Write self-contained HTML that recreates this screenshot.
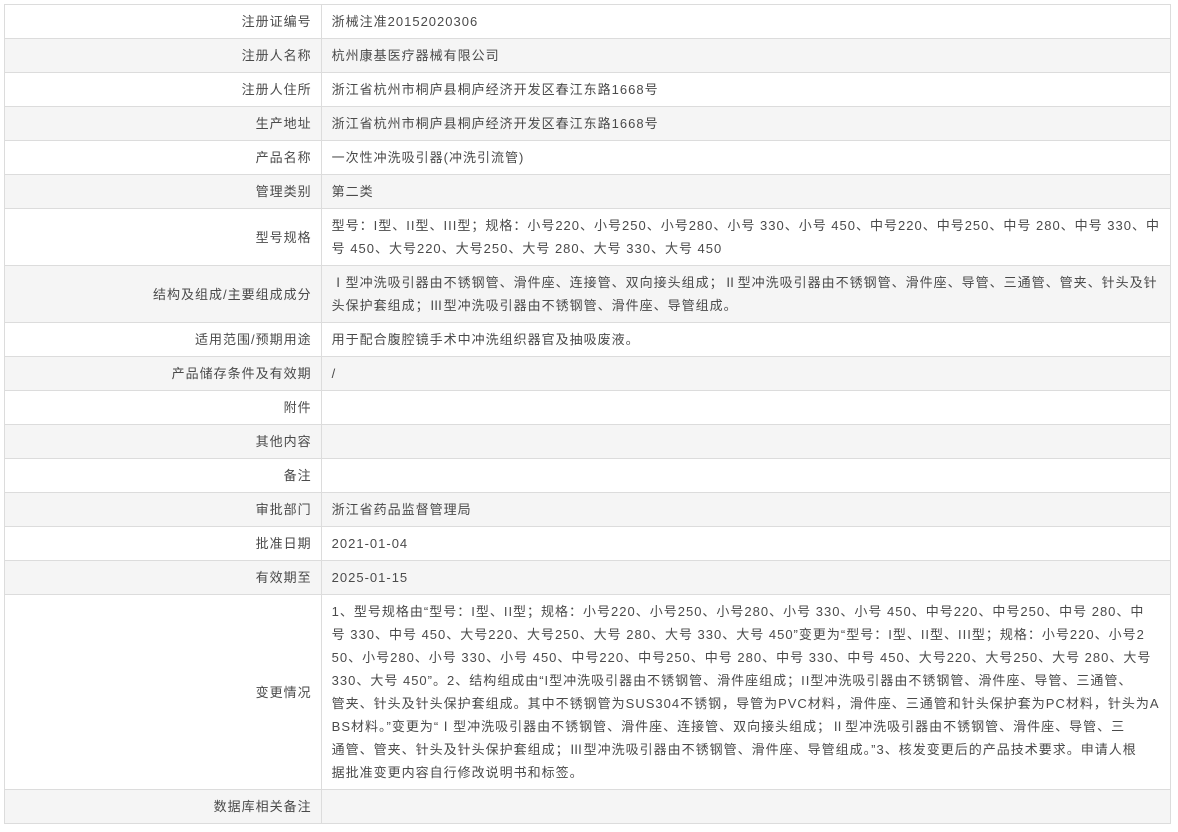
<!DOCTYPE html>
<html><head><meta charset="utf-8"><style>
body{margin:0;background:#fff;font-family:"Liberation Sans","Noto Sans CJK SC",sans-serif;font-size:13px;color:#4a4a4a}
table{position:absolute;left:4px;top:4px;width:1167px;border-collapse:collapse}
td{border:1px solid #dcdcdc;padding:5px 10px;line-height:23px;vertical-align:middle;white-space:nowrap;letter-spacing:1px}
td.l{width:297px;text-align:right;padding-right:9px}
tr:nth-child(even) td{background:#f5f5f5}
</style></head><body>
<table>
<tr><td class="l">注册证编号</td><td>浙械注准20152020306</td></tr>
<tr><td class="l">注册人名称</td><td>杭州康基医疗器械有限公司</td></tr>
<tr><td class="l">注册人住所</td><td>浙江省杭州市桐庐县桐庐经济开发区春江东路1668号</td></tr>
<tr><td class="l">生产地址</td><td>浙江省杭州市桐庐县桐庐经济开发区春江东路1668号</td></tr>
<tr><td class="l">产品名称</td><td>一次性冲洗吸引器(冲洗引流管)</td></tr>
<tr><td class="l">管理类别</td><td>第二类</td></tr>
<tr><td class="l">型号规格</td><td>型号：I型、II型、III型；规格：小号220、小号250、小号280、小号 330、小号 450、中号220、中号250、中号 280、中号 330、中<br>号 450、大号220、大号250、大号 280、大号 330、大号 450</td></tr>
<tr><td class="l">结构及组成/主要组成成分</td><td>Ⅰ型冲洗吸引器由不锈钢管、滑件座、连接管、双向接头组成；Ⅱ型冲洗吸引器由不锈钢管、滑件座、导管、三通管、管夹、针头及针<br>头保护套组成；Ⅲ型冲洗吸引器由不锈钢管、滑件座、导管组成。</td></tr>
<tr><td class="l">适用范围/预期用途</td><td>用于配合腹腔镜手术中冲洗组织器官及抽吸废液。</td></tr>
<tr><td class="l">产品储存条件及有效期</td><td>/</td></tr>
<tr><td class="l">附件</td><td></td></tr>
<tr><td class="l">其他内容</td><td></td></tr>
<tr><td class="l">备注</td><td></td></tr>
<tr><td class="l">审批部门</td><td>浙江省药品监督管理局</td></tr>
<tr><td class="l">批准日期</td><td>2021-01-04</td></tr>
<tr><td class="l">有效期至</td><td>2025-01-15</td></tr>
<tr><td class="l">变更情况</td><td>1、型号规格由“型号：I型、II型；规格：小号220、小号250、小号280、小号 330、小号 450、中号220、中号250、中号 280、中<br>号 330、中号 450、大号220、大号250、大号 280、大号 330、大号 450”变更为“型号：I型、II型、III型；规格：小号220、小号2<br>50、小号280、小号 330、小号 450、中号220、中号250、中号 280、中号 330、中号 450、大号220、大号250、大号 280、大号<br>330、大号 450”。2、结构组成由“I型冲洗吸引器由不锈钢管、滑件座组成；II型冲洗吸引器由不锈钢管、滑件座、导管、三通管、<br>管夹、针头及针头保护套组成。其中不锈钢管为SUS304不锈钢，导管为PVC材料，滑件座、三通管和针头保护套为PC材料，针头为A<br>BS材料。”变更为“Ⅰ型冲洗吸引器由不锈钢管、滑件座、连接管、双向接头组成；Ⅱ型冲洗吸引器由不锈钢管、滑件座、导管、三<br>通管、管夹、针头及针头保护套组成；Ⅲ型冲洗吸引器由不锈钢管、滑件座、导管组成。”3、核发变更后的产品技术要求。申请人根<br>据批准变更内容自行修改说明书和标签。</td></tr>
<tr><td class="l">数据库相关备注</td><td></td></tr>
</table>
</body></html>
